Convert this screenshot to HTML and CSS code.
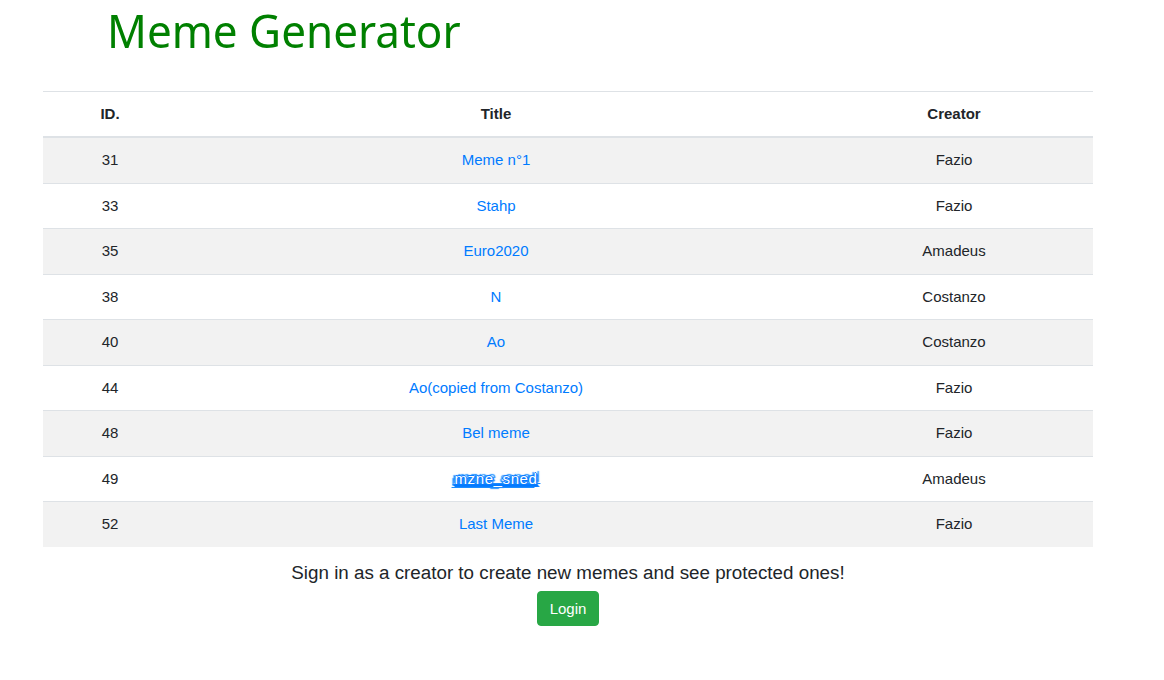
FILE: index.html
```html
<!DOCTYPE html>
<html>
<head>
<meta charset="utf-8">
<link rel="stylesheet" href="styles.css">
</head>
<body>
<header class="brand">
  <h1 class="brand-title">Meme Generator</h1>
</header>
<main class="content">
  <table class="memes">
    <colgroup>
      <col class="c-id"><col class="c-title"><col class="c-creator">
    </colgroup>
    <thead>
      <tr><th>ID.</th><th>Title</th><th>Creator</th></tr>
    </thead>
    <tbody>
      <tr><td>31</td><td><a class="meme-link" href="#">Meme n°1</a></td><td>Fazio</td></tr>
      <tr><td>33</td><td><a class="meme-link" href="#">Stahp</a></td><td>Fazio</td></tr>
      <tr><td>35</td><td><a class="meme-link" href="#">Euro2020</a></td><td>Amadeus</td></tr>
      <tr><td>38</td><td><a class="meme-link" href="#">N</a></td><td>Costanzo</td></tr>
      <tr><td>40</td><td><a class="meme-link" href="#">Ao</a></td><td>Costanzo</td></tr>
      <tr><td>44</td><td><a class="meme-link" href="#">Ao(copied from Costanzo)</a></td><td>Fazio</td></tr>
      <tr><td>48</td><td><a class="meme-link" href="#">Bel meme</a></td><td>Fazio</td></tr>
      <tr><td>49</td><td><a class="meme-link glitch" href="#">mzne_sned</a></td><td>Amadeus</td></tr>
      <tr><td>52</td><td><a class="meme-link" href="#">Last Meme</a></td><td>Fazio</td></tr>
    </tbody>
  </table>
  <section class="signin">
    <p class="signin-text">Sign in as a creator to create new memes and see protected ones!</p>
    <button class="btn-login" type="button">Login</button>
  </section>
</main>
</body>
</html>
```

FILE: styles.css
```css
html, body {
  margin: 0;
  padding: 0;
  background: #fff;
}
body {
  font-family: "Liberation Sans", Arial, sans-serif;
  font-size: 15px;
  color: #212529;
}
.brand {
  padding: 6px 0 0 107px;
  height: 91px;
  box-sizing: border-box;
}
.brand-title {
  margin: 0;
  font-family: "Noto Sans", "Open Sans", sans-serif;
  font-weight: 400;
  font-size: 44px;
  line-height: 50px;
  color: #008000;
  transform: scaleY(1.04);
  transform-origin: left bottom;
}
.content {
  width: 1050px;
  margin-left: 43px;
}
.memes {
  width: 1050px;
  border-collapse: collapse;
  table-layout: fixed;
}
.c-id { width: 134px; }
.c-title { width: 638px; }
.c-creator { width: 278px; }
.memes th, .memes td {
  text-align: center;
  padding: 12px;
  line-height: 20.5px;
  border-top: 1px solid #dee2e6;
}
.memes th {
  font-weight: 700;
  padding-top: 11px;
  padding-bottom: 12px;
  line-height: 21px;
  border-bottom: 2px solid #dee2e6;
}
.memes tbody tr:first-child td {
  border-top: 0;
}
.memes tbody tr:nth-child(odd) {
  background: #f2f2f2;
}
.meme-link {
  color: #007bff;
  text-decoration: none;
}
.glitch {
  color: #fff;
  text-decoration: underline;
  text-decoration-color: #007bff;
  letter-spacing: 0.6px;
  text-shadow: 1px 0 0 #0a7bff, -1px 0 0 #0a7bff, 0 1px 0 #0a7bff, 0 -1px 0 #0a7bff,
    2px 1px 1px #1a8cff, -2px -1px 1px #1a8cff, 3px -2px 1px #1a8cff, -3px 2px 1px #1a8cff;
}
.signin {
  display: flex;
  flex-direction: column;
  align-items: center;
  padding-top: 13px;
}
.signin-text {
  margin: 0 0 6px 0;
  font-size: 18.8px;
  line-height: 25px;
}
.btn-login {
  font-family: "Liberation Sans", Arial, sans-serif;
  font-size: 15px;
  line-height: 21px;
  color: #fff;
  background: #28a745;
  border: 1px solid #28a745;
  border-radius: 4px;
  padding: 6px 12px;
  cursor: pointer;
}
```
